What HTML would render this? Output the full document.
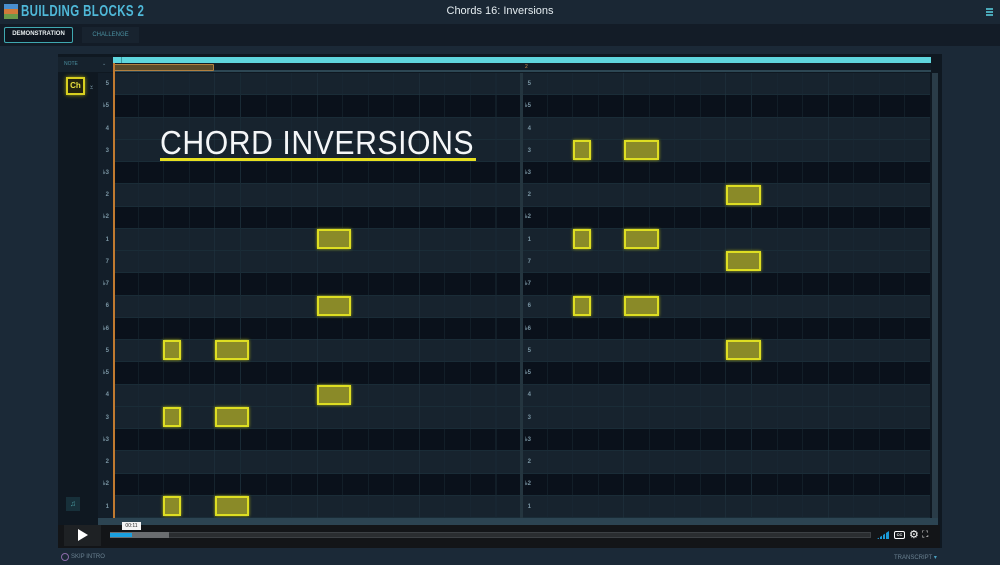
<!DOCTYPE html>
<html><head><meta charset="utf-8"><style>
*{margin:0;padding:0;box-sizing:border-box}
body{width:1000px;height:565px;overflow:hidden;background:#1b2937;font-family:"Liberation Sans",sans-serif;position:relative}
.a{position:absolute}
.row{position:absolute;left:98px;width:832px;height:22.25px;border-bottom:1px solid #1a2c37}
.n{background:#17232e}.f{background:#0a111b}
.lbl{position:absolute;left:98px;width:15px;font-size:6px;color:#7a95a3;text-align:right;padding-right:4px;line-height:22px;font-weight:bold}
.note{position:absolute;height:20px;background:#8a8a28;border:2px solid #dede22;box-shadow:0 0 3px #aaaa10}
</style></head><body>
<div class="a" style="left:0;top:0;width:1000px;height:24px;background:#1a2734"></div>
<div class="a" style="left:4px;top:4px;width:14px;height:15px;background:linear-gradient(#4a8fd0 0 33%,#d07a3a 33% 66%,#6a9a4a 66%)"></div>
<div class="a" style="left:21px;top:3px;font-size:16px;font-weight:bold;color:#4fb8d8;transform:scaleX(.72);transform-origin:left;letter-spacing:.5px">BUILDING BLOCKS 2</div>
<div class="a" style="left:0;top:5px;width:1000px;text-align:center;font-size:11px;color:#e4ecf0">Chords 16: Inversions</div>
<div class="a" style="left:986px;top:8px;width:7px;height:8px;border-top:2px solid #4aa8b8;border-bottom:2px solid #4aa8b8"><div style="margin-top:1px;height:2px;background:#4aa8b8"></div></div>
<div class="a" style="left:0;top:24px;width:1000px;height:22px;background:#131c27"></div>
<div class="a" style="left:4px;top:27px;width:69px;height:16px;border:1.5px solid #3fa8b0;border-radius:2px;background:#0e1620;color:#e8eef0;font-size:6px;font-weight:bold;text-align:center;line-height:13px">DEMONSTRATION</div>
<div class="a" style="left:82px;top:27px;width:57px;height:16px;background:#18232f;color:#4a8fa0;font-size:6px;text-align:center;line-height:16px">CHALLENGE</div>

<div class="a" style="left:58px;top:54px;width:884px;height:494px;background:#0f1821"></div>
<div class="a" style="left:58px;top:57px;width:55px;height:15px;background:#16222d;font-size:5px;color:#4a8fa0;padding:4px 0 0 6px">NOTE<span style="position:absolute;left:44px;color:#6a8a9a">⌄</span></div>
<div class="a" style="left:113px;top:57px;width:818px;height:6px;background:#5fd6de"></div>
<div class="a" style="left:121px;top:57px;width:1px;height:6px;background:#3a9aa2"></div>
<div class="a" style="left:113px;top:63px;width:818px;height:9px;background:#121c26;border-bottom:2px solid #2d4754"></div>
<div class="a" style="left:114px;top:64px;width:100px;height:7px;background:#5a4a2a;border:1px solid #b08040;border-radius:1px"></div>
<div class="a" style="left:525px;top:64px;font-size:5px;color:#d09050">2</div>
<div class="a" style="left:66px;top:77px;width:19px;height:18px;border:2px solid #d8d020;background:#242410;color:#e8e040;font-size:8px;font-weight:bold;text-align:center;line-height:14px;box-shadow:0 0 4px #9a9a10">Ch</div>
<div class="a" style="left:89px;top:84px;font-size:6px;color:#7a98a8;line-height:5px">⌄<br>⌃</div>
<div class="a" style="left:66px;top:497px;width:14px;height:14px;background:#17303a;color:#4a9aa0;font-size:8px;text-align:center;line-height:14px">♫</div>

<div class="row n" style="top:73px"></div>
<div class="row f" style="top:95.25px"></div>
<div class="row n" style="top:117.5px"></div>
<div class="row n" style="top:139.75px"></div>
<div class="row f" style="top:162px"></div>
<div class="row n" style="top:184.25px"></div>
<div class="row f" style="top:206.5px"></div>
<div class="row n" style="top:228.75px"></div>
<div class="row n" style="top:251px"></div>
<div class="row f" style="top:273.25px"></div>
<div class="row n" style="top:295.5px"></div>
<div class="row f" style="top:317.75px"></div>
<div class="row n" style="top:340px"></div>
<div class="row f" style="top:362.25px"></div>
<div class="row n" style="top:384.5px"></div>
<div class="row n" style="top:406.75px"></div>
<div class="row f" style="top:429px"></div>
<div class="row n" style="top:451.25px"></div>
<div class="row f" style="top:473.5px"></div>
<div class="row n" style="top:495.75px"></div>
<div class="a" style="left:98px;top:73px;width:15px;height:445px;background:#131e29"></div>
<div class="a" style="left:113px;top:73px;width:817px;height:445px;background:repeating-linear-gradient(90deg,transparent 0 25px,#192a35 25px 25.55px)"></div>
<div class="a" style="left:113px;top:73px;width:817px;height:445px;background:repeating-linear-gradient(90deg,transparent 0 101.6px,#213641 101.6px 102.2px)"></div>
<div class="a" style="left:520px;top:73px;width:3px;height:445px;background:#24353f"></div>
<div class="a" style="left:113px;top:63px;width:1.5px;height:455px;background:#c07a30"></div>

<div class="lbl" style="top:73px">5</div><div class="lbl" style="top:95px">♭5</div><div class="lbl" style="top:118px">4</div><div class="lbl" style="top:140px">3</div><div class="lbl" style="top:162px">♭3</div><div class="lbl" style="top:184px">2</div><div class="lbl" style="top:206px">♭2</div><div class="lbl" style="top:229px">1</div><div class="lbl" style="top:251px">7</div><div class="lbl" style="top:273px">♭7</div><div class="lbl" style="top:295px">6</div><div class="lbl" style="top:318px">♭6</div><div class="lbl" style="top:340px">5</div><div class="lbl" style="top:362px">♭5</div><div class="lbl" style="top:384px">4</div><div class="lbl" style="top:407px">3</div><div class="lbl" style="top:429px">♭3</div><div class="lbl" style="top:451px">2</div><div class="lbl" style="top:473px">♭2</div><div class="lbl" style="top:496px">1</div>
<div class="lbl" style="left:520px;top:73px">5</div><div class="lbl" style="left:520px;top:95px">♭5</div><div class="lbl" style="left:520px;top:118px">4</div><div class="lbl" style="left:520px;top:140px">3</div><div class="lbl" style="left:520px;top:162px">♭3</div><div class="lbl" style="left:520px;top:184px">2</div><div class="lbl" style="left:520px;top:206px">♭2</div><div class="lbl" style="left:520px;top:229px">1</div><div class="lbl" style="left:520px;top:251px">7</div><div class="lbl" style="left:520px;top:273px">♭7</div><div class="lbl" style="left:520px;top:295px">6</div><div class="lbl" style="left:520px;top:318px">♭6</div><div class="lbl" style="left:520px;top:340px">5</div><div class="lbl" style="left:520px;top:362px">♭5</div><div class="lbl" style="left:520px;top:384px">4</div><div class="lbl" style="left:520px;top:407px">3</div><div class="lbl" style="left:520px;top:429px">♭3</div><div class="lbl" style="left:520px;top:451px">2</div><div class="lbl" style="left:520px;top:473px">♭2</div><div class="lbl" style="left:520px;top:496px">1</div>

<div class="note" style="left:163px;top:340px;width:18px"></div>
<div class="note" style="left:163px;top:407px;width:18px"></div>
<div class="note" style="left:163px;top:496px;width:18px"></div>
<div class="note" style="left:215px;top:340px;width:34px"></div>
<div class="note" style="left:215px;top:407px;width:34px"></div>
<div class="note" style="left:215px;top:496px;width:34px"></div>
<div class="note" style="left:317px;top:229px;width:34px"></div>
<div class="note" style="left:317px;top:296px;width:34px"></div>
<div class="note" style="left:317px;top:385px;width:34px"></div>
<div class="note" style="left:573px;top:140px;width:18px"></div>
<div class="note" style="left:573px;top:229px;width:18px"></div>
<div class="note" style="left:573px;top:296px;width:18px"></div>
<div class="note" style="left:624px;top:140px;width:35px"></div>
<div class="note" style="left:624px;top:229px;width:35px"></div>
<div class="note" style="left:624px;top:296px;width:35px"></div>
<div class="note" style="left:726px;top:185px;width:35px"></div>
<div class="note" style="left:726px;top:251px;width:35px"></div>
<div class="note" style="left:726px;top:340px;width:35px"></div>

<div class="a" style="left:160px;top:124px;font-size:33px;color:#f4f6f8;letter-spacing:.6px;white-space:nowrap;transform:scaleX(.915);transform-origin:left">CHORD INVERSIONS</div>
<div class="a" style="left:160px;top:158px;width:316px;height:3px;background:#e8e020"></div>

<div class="a" style="left:932px;top:73px;width:6px;height:445px;background:#2a3c48"></div>
<div class="a" style="left:98px;top:518px;width:840px;height:7px;background:#2c4452"></div>
<div class="a" style="left:58px;top:525px;width:882px;height:23px;background:#131518"></div>
<div class="a" style="left:64px;top:525px;width:37px;height:21px;background:#1e2124"></div>
<div class="a" style="left:78px;top:529px;width:0;height:0;border-left:10px solid #fff;border-top:6px solid transparent;border-bottom:6px solid transparent"></div>
<div class="a" style="left:110px;top:532px;width:761px;height:6px;background:#2a2d30;border:1px solid #3c4044"></div>
<div class="a" style="left:110px;top:532px;width:59px;height:6px;background:#6a6d70"></div>
<div class="a" style="left:110px;top:533px;width:22px;height:4px;background:#1aa0e0"></div>
<div class="a" style="left:122px;top:522px;width:19px;height:8px;background:#f4f4f4;color:#222;font-size:5px;text-align:center;line-height:8px">00:11</div>
<div class="a" style="left:877px;top:531px;width:12px;height:8px;background:linear-gradient(90deg,#1a9ad8 0 2px,transparent 2px 3px,#1a9ad8 3px 5px,transparent 5px 6px,#1a9ad8 6px 8px,transparent 8px 9px,#1a9ad8 9px);clip-path:polygon(0 100%,100% 0,100% 100%)"></div>
<div class="a" style="left:894px;top:531px;width:11px;height:8px;border:1.5px solid #fff;border-radius:2px;font-size:4px;color:#fff;line-height:5px;text-align:center;font-weight:bold">CC</div>
<div class="a" style="left:909px;top:528px;font-size:11px;color:#fff">⚙</div>
<div class="a" style="left:922px;top:529px;font-size:9px;color:#fff">⛶</div>
<div class="a" style="left:61px;top:553px;width:8px;height:8px;border:1px solid #8a6aa8;border-radius:50%"></div>
<div class="a" style="left:71px;top:554px;font-size:6px;color:#6a8090">SKIP INTRO</div>
<div class="a" style="left:894px;top:554px;font-size:6px;color:#6a8090">TRANSCRIPT <span style="color:#4aa0c0">▾</span></div>
</body></html>
